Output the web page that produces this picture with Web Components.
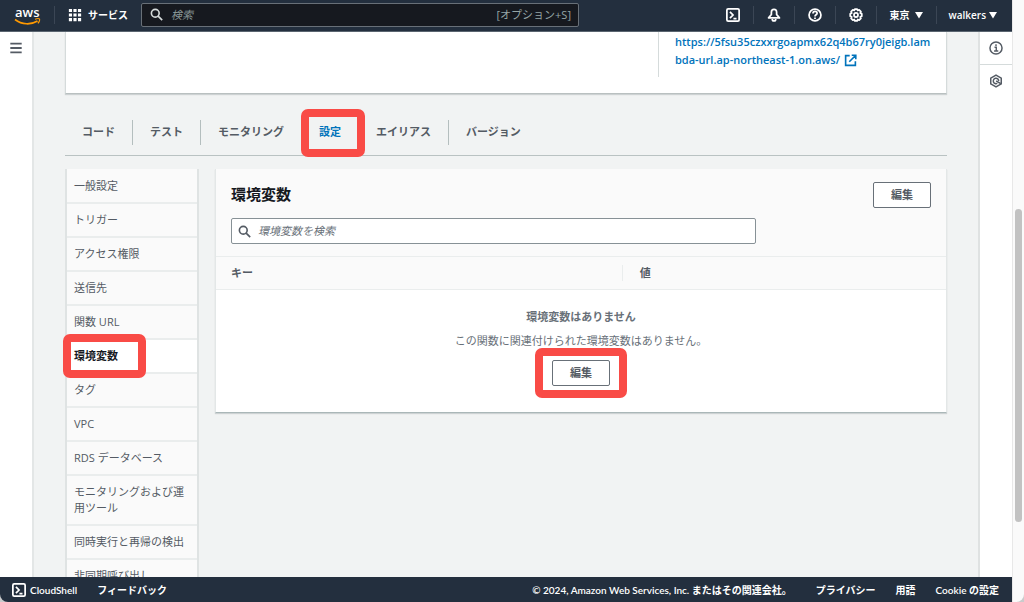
<!DOCTYPE html>
<html lang="ja">
<head>
<meta charset="utf-8">
<title>Lambda - 環境変数</title>
<style>
html, body { margin: 0; height: 100%; }
body {
  background: #c9cbcc;
  font-family: "Open Sans", "Noto Sans CJK JP", sans-serif;
  font-size: 11px; line-height: 16px; color: #545b64;
  --navy: #232f3e; --ink: #16191f; --line: #d5dbdb; --rule: #eaeded;
  --blue: #0073bb; --page: #f1f3f3; --soft: #fafafa; --red: #f94b46;
}
</style>
</head>
<body>
<app-shell>
  <console-header slot="header"></console-header>
  <side-rail slot="left"><icon-button icon="menu" label="メニュー"></icon-button></side-rail>
  <function-url slot="main" first="https://5fsu35czxxrgoapmx62q4b67ry0jeigb.lam" second="bda-url.ap-northeast-1.on.aws/"></function-url>
  <tab-list slot="main">
    <tab-item>コード</tab-item>
    <tab-item>テスト</tab-item>
    <tab-item>モニタリング</tab-item>
    <tab-item selected>設定</tab-item>
    <tab-item>エイリアス</tab-item>
    <tab-item>バージョン</tab-item>
  </tab-list>
  <config-layout slot="main">
    <side-nav slot="nav">
      <nav-item>一般設定</nav-item>
      <nav-item>トリガー</nav-item>
      <nav-item>アクセス権限</nav-item>
      <nav-item>送信先</nav-item>
      <nav-item>関数 URL</nav-item>
      <nav-item selected>環境変数</nav-item>
      <nav-item>タグ</nav-item>
      <nav-item>VPC</nav-item>
      <nav-item>RDS データベース</nav-item>
      <nav-item>モニタリングおよび運用ツール</nav-item>
      <nav-item>同時実行と再帰の検出</nav-item>
      <nav-item>非同期呼び出し</nav-item>
    </side-nav>
    <env-panel></env-panel>
  </config-layout>
  <side-rail slot="right" end>
    <icon-button icon="info" label="情報"></icon-button>
    <icon-button icon="hexagon" label="チュートリアル"></icon-button>
  </side-rail>
  <console-footer slot="footer"></console-footer>
</app-shell>

<script>
const icons = {
  menu: '<path d="M1.500 3h13M1.500 8h13M1.500 13h13" stroke-width="2.200"/>',
  search: '<circle cx="6.5" cy="6.5" r="4.8"/><path d="M10 10l5 5"/>',
  shell: '<rect x="1" y="1" width="14" height="14" rx="1.5"/><path d="M4.5 4.5L8 8l-3.5 3.5M8.5 12H12"/>',
  bell: '<path d="M8 1.500c-2 0-3 1.500-3 3.300v2.600L1.800 11.300h12.400L11 7.400V4.800c0-1.800-1-3.300-3-3.300z" stroke-linejoin="round"/><path d="M6 12.500c0 3 4 3 4 0"/>',
  help: '<circle cx="8" cy="8" r="6.8"/><path d="M5.700 6.300c0-3.200 4.700-3 4.700-.2 0 1.700-2.400 1.700-2.400 3.500M8 10.800v1.700"/>',
  gear: '<path d="M6.700 1.200h2.600l.6 1.600 1.700-.7 2 2-.7 1.700 1.700.7v2.900l-1.700.7.7 1.700-2 2-1.700-.7-.6 1.700H6.700l-.6-1.700-1.700.7-2-2 .7-1.700-1.700-.7V6.500l1.700-.7-.7-1.700 2-2 1.700.7z" stroke-linejoin="round"/><circle cx="8" cy="8" r="2.300"/>',
  info: '<circle cx="8" cy="8" r="6.900" stroke-width="1.700"/><path d="M6.300 7.200h2v4M5.800 11.500h4.800M8 3.700v2" stroke-width="1.600"/>',
  hexagon: '<path d="M8 1.200l6 3.400v6.800L8 14.800l-6-3.400V4.600z" stroke-width="1.700" stroke-linejoin="round"/><path d="M9.500 10.700A3.100 3.100 0 1 1 11.100 8M8.200 8l5.300 3" stroke-width="1.700"/>',
  external: '<path d="M7 2H2v12h12V9M9.500 1.500h5v5M14.500 1.500L6.500 9.500" stroke-width="2"/>',
  grid: '<path d="M1 1h3.600v3.600H1zM6.200 1h3.600v3.600H6.200zM11.400 1H15v3.600h-3.600zM1 6.200h3.600v3.600H1zM6.200 6.200h3.600v3.600H6.200zM11.400 6.200H15v3.600h-3.600zM1 11.400h3.600V15H1zM6.200 11.400h3.600V15H6.200zM11.400 11.400H15V15h-3.600z" fill="currentColor" stroke="none"/>',
  caret: '<path d="M0 2h16L8 15z" fill="currentColor" stroke="none"/>'
};
const define = (name, render) => customElements.define(name, class extends HTMLElement {
  constructor() {
    super();
    this.attachShadow({ mode: 'open' });
  }
  connectedCallback() {
    if (this.shadowRoot.childNodes.length) return;
    const t = document.createElement('template');
    t.innerHTML = render(this);
    this.shadowRoot.append(t.content.cloneNode(true));
  }
});
const base = '*{box-sizing:border-box}button,input{font:inherit;color:inherit;margin:0}button{background:none;border:0;padding:0}a{color:inherit;text-decoration:none}';

define('ui-icon', el => `<style>:host{display:block;flex:none;width:14px;height:14px}svg{display:block;width:100%;height:100%}</style>
<svg viewBox="0 0 16 16" fill="none" stroke="currentColor" stroke-width="2" aria-hidden="true">${icons[el.getAttribute('name')]}</svg>`);

define('focus-frame', () => `<style>:host{position:absolute;border:8px solid var(--red);border-radius:7px;box-sizing:border-box;pointer-events:none;z-index:2}</style>`);

define('icon-button', el => `<style>${base}:host{display:block}button{display:grid;place-items:center;width:100%;height:32px}</style>
<button aria-label="${el.getAttribute('label')}"><ui-icon name="${el.getAttribute('icon')}"></ui-icon></button>`);

define('ui-button', () => `<style>${base}:host{display:block}
button{display:block;height:26px;padding:0 17px;border:1px solid #687078;border-radius:2px;background:#fff;font-weight:700;color:#545b64}</style>
<button><slot></slot></button>`);

define('app-shell', () => `<style>${base}
:host{display:grid;grid-template-columns:minmax(0,1fr) 12px;height:100vh}
.app{display:grid;grid-template-rows:32px minmax(0,1fr) 25px;min-height:0;height:100vh}
.body{display:grid;grid-template-columns:34px minmax(0,1fr) 34px;min-height:0}
main{background:var(--page);padding:0 31px;overflow:hidden;min-height:0}
.scroll{background:var(--soft);border-left:1px solid #e8e8e8;border-bottom-right-radius:8px;display:grid;grid-template-rows:209fr 313fr 80fr;justify-items:center}
.thumb{grid-row:2;width:7px;border-radius:4px;background:#c2c2c2}
</style>
<div class="app"><slot name="header"></slot>
<div class="body"><slot name="left"></slot><main><slot name="main"></slot></main><slot name="right"></slot></div>
<slot name="footer"></slot></div><div class="scroll"><div class="thumb"></div></div>`);

define('side-rail', () => `<style>:host{display:block;background:#fff;border-right:2px solid #e3e6e6;box-sizing:border-box}
:host([end]){border-right:0;border-left:2px solid #dfe2e2}
:host([end]) ::slotted(:first-child){border-bottom:1px solid var(--line)}</style><slot></slot>`);

define('console-header', () => `<style>${base}
:host{display:flex;align-items:center;background:var(--navy);border-bottom:1px solid #5a6570;color:#fff;font-size:10px;font-weight:600;padding-bottom:2px;box-sizing:border-box}
.logo{width:54px;padding-left:14px;display:block}
.logo svg{display:block;width:27px;height:26px}
.line{width:1px;height:18px;background:#3b4655}
.services{display:flex;align-items:center;gap:6px;padding:0 13px 0 13px}
.search{position:relative;flex:0 1 438px;min-width:120px;display:flex;align-items:center;height:24px;border:1px solid #687078;border-radius:2px;background:#16191f;padding:0 7px 0 8px;gap:8px;font-size:11px;font-weight:400;color:#95a5a6}
.search ui-icon{width:13px;height:13px;color:#d5dbdb}
input{flex:1;min-width:0;border:0;background:none;padding:0;outline:0}
input::placeholder{color:#879596;font-style:italic;opacity:1}
.tools{margin-left:auto;display:flex;align-items:center}
.tools button{width:40px;display:grid;place-items:center}
.tools .menu{width:auto;display:flex;gap:5px;padding:0 13px}
.menu ui-icon{width:8px;height:8px}
.tools .menu:last-child{gap:3px;padding:0 15px 0 12px}
</style>
<a class="logo" href="#" aria-label="aws"><svg viewBox="0 0 27 26"><text x="1" y="15" font-family="Open Sans" font-size="13" font-weight="600" fill="#fff">aws</text><path d="M1 17.500c7 5.500 16 5.500 22.500 1.500" fill="none" stroke="#f90" stroke-width="1.600"/><path d="M21 17.200c2-.7 4-.7 4.500-.2.500 1-.5 3.400-1.700 4.300" fill="none" stroke="#f90" stroke-width="1.200"/></svg></a>
<span class="line"></span>
<button class="services"><ui-icon name="grid"></ui-icon>サービス</button>
<label class="search"><ui-icon name="search"></ui-icon><input type="text" placeholder="検索" aria-label="検索"><span>[オプション+S]</span></label>
<div class="tools">
<button aria-label="CloudShell"><ui-icon name="shell"></ui-icon></button><span class="line"></span>
<button aria-label="通知"><ui-icon name="bell"></ui-icon></button><span class="line"></span>
<button aria-label="ヘルプ"><ui-icon name="help"></ui-icon></button><span class="line"></span>
<button aria-label="設定"><ui-icon name="gear"></ui-icon></button><span class="line"></span>
<button class="menu">東京<ui-icon name="caret"></ui-icon></button><span class="line"></span>
<button class="menu">walkers<ui-icon name="caret"></ui-icon></button>
</div>`);

define('console-footer', () => `<style>${base}
:host{display:flex;align-items:center;background:var(--navy);color:#fff;font-family:Lato,"Noto Sans CJK JP",sans-serif;font-size:10px;font-weight:600;border-bottom-left-radius:8px;padding:0 13px 0 12px;gap:20px;white-space:nowrap}
button{display:flex;align-items:center;gap:4px}.copy{margin-left:auto;margin-right:4px}</style>
<button><ui-icon name="shell"></ui-icon>CloudShell</button><a href="#">フィードバック</a>
<span class="copy">© 2024, Amazon Web Services, Inc. またはその関連会社。</span>
<a href="#">プライバシー</a><a href="#">用語</a><a href="#">Cookie の設定</a>`);

define('function-url', el => `<style>${base}
:host{display:flex;justify-content:flex-end;height:62px;background:#fff;box-sizing:border-box;padding-bottom:16px;border:1px solid var(--line);border-top:0;border-bottom-color:#b9c0c0;box-shadow:0 1px 1px rgba(0,28,36,.15)}
.cell{width:288px;border-left:1px solid var(--line);padding:1px 0 0 16px;line-height:18px;white-space:nowrap}
a{color:var(--blue);font-weight:600}.row{display:flex;align-items:center;gap:4px}ui-icon{width:13px;height:13px}</style>
<div class="cell"><a href="#"><div>${el.getAttribute('first')}</div><div class="row">${el.getAttribute('second')}<ui-icon name="external"></ui-icon></div></a></div>`);

define('tab-list', () => `<style>:host{display:flex;align-items:center;margin-top:15px;height:47px;border-bottom:1px solid #b9c2c2;box-sizing:border-box}</style><slot></slot>`);
define('tab-item', el => `<style>${base}
:host{display:block;position:relative;border-right:1px solid #b4bebe;white-space:nowrap}
:host(:last-child){border-right:0}
button{height:25px;padding:0 17px;font-weight:700}
:host([selected]) button{color:var(--blue)}
focus-frame{inset:-11px -7px -12px -1px}</style>
<button role="tab"><slot></slot></button>${el.hasAttribute('selected') ? '<focus-frame></focus-frame>' : ''}`);

define('config-layout', () => `<style>:host{display:grid;grid-template-columns:134px minmax(0,1fr);gap:16px;align-items:start;margin-top:13px}</style><slot name="nav"></slot><slot></slot>`);
define('side-nav', () => `<style>:host{display:block;background:var(--soft);border:2px solid #dfe3e3;border-top:0;box-sizing:border-box;padding-top:1px}</style><slot></slot>`);
define('nav-item', el => `<style>${base}
:host{display:block;position:relative;border-bottom:2px solid var(--rule)}
a{display:block;padding:8px 7px}
:host([selected]){background:#fff;font-weight:700;color:var(--ink)}
focus-frame{left:-4px;top:-6px;width:83px;height:44px}</style>
<a href="#"><slot></slot></a>${el.hasAttribute('selected') ? '<focus-frame></focus-frame>' : ''}`);

define('env-panel', () => `<style>${base}
:host{display:block;background:#fff;border:1px solid #e3e7e7;border-top:0;border-bottom-color:#aab7b8;box-shadow:0 1px 1px rgba(0,28,36,.15);box-sizing:border-box}
header{background:var(--soft);padding:13px 15px 12px}
.top{display:flex;justify-content:space-between;align-items:flex-start}
h2{margin:0;font-size:15px;line-height:24px;color:var(--ink)}
.search{display:flex;align-items:center;gap:7px;width:75%;height:26px;margin-top:10px;border:1px solid #879196;border-radius:2px;background:#fff;padding:0 6px}
.search ui-icon{width:13px;height:13px}
input{flex:1;min-width:0;border:0;outline:0;padding:0;background:none}
input::placeholder{color:#687078;font-style:italic;opacity:1}
table{width:100%;border-collapse:collapse;table-layout:fixed}
th{height:33px;padding:0 15px;text-align:left;background:var(--soft);border:1px solid var(--rule);border-width:1px 0}
th:first-child{width:56%}
th+th>div{border-left:1px solid var(--rule);margin-left:-18px;padding-left:17px}
td{padding:19px 0 26px;color:#687078}
.empty{display:grid;justify-items:center}
p{margin:8px 0 11px}
.action{position:relative}
focus-frame{inset:-12px -17px}</style>
<header><div class="top"><h2>環境変数</h2><ui-button>編集</ui-button></div>
<label class="search"><ui-icon name="search"></ui-icon><input type="text" placeholder="環境変数を検索" aria-label="環境変数を検索"></label></header>
<table><thead><tr><th><div>キー</div></th><th><div>値</div></th></tr></thead>
<tbody><tr><td colspan="2"><div class="empty"><strong>環境変数はありません</strong><p>この関数に関連付けられた環境変数はありません。</p><div class="action"><ui-button>編集</ui-button><focus-frame></focus-frame></div></div></td></tr></tbody></table>`);
</script>
</body>
</html>
